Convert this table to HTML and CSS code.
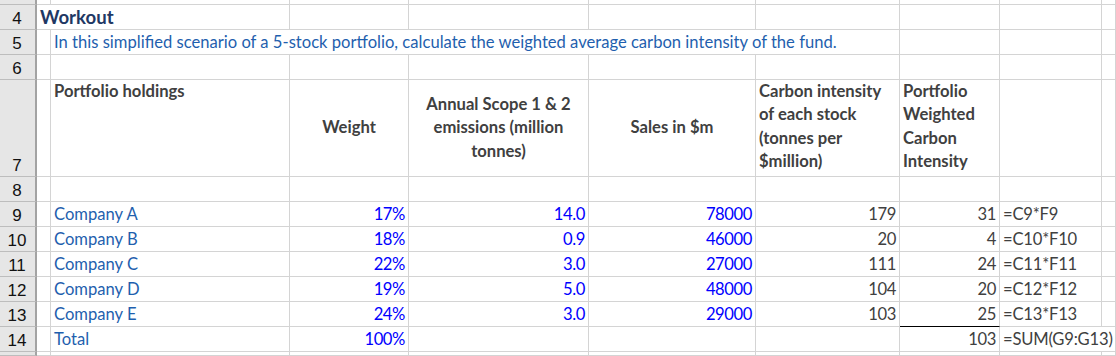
FILE: index.html
```html
<!DOCTYPE html>
<html lang="en">
<head>
<meta charset="utf-8">
<title>Workout</title>
<link rel="stylesheet" href="styles.css">
</head>
<body>
<div class="sheet">
  <!-- row 3 (partial) -->
  <div class="rh"></div><div class="c"></div><div class="c"></div><div class="c"></div><div class="c"></div><div class="c"></div><div class="c"></div><div class="c"></div><div class="c"></div><div class="c"></div>

  <!-- row 4 -->
  <div class="rh">4</div>
  <div class="c span2 title">Workout</div>
  <div class="c"></div><div class="c"></div><div class="c"></div><div class="c"></div><div class="c"></div><div class="c"></div><div class="c"></div>

  <!-- row 5 -->
  <div class="rh">5</div>
  <div class="c"></div>
  <div class="c span5 blue">In this simplified scenario of a 5-stock portfolio, calculate the weighted average carbon intensity of the fund.</div>
  <div class="c"></div><div class="c"></div><div class="c"></div>

  <!-- row 6 -->
  <div class="rh">6</div>
  <div class="c"></div><div class="c"></div><div class="c"></div><div class="c"></div><div class="c"></div><div class="c"></div><div class="c"></div><div class="c"></div><div class="c"></div>

  <!-- row 7 -->
  <div class="rh">7</div>
  <div class="c"></div>
  <div class="c hdr top">Portfolio holdings</div>
  <div class="c hdr mid">Weight</div>
  <div class="c hdr mid">Annual Scope 1 &amp; 2<br>emissions (million<br>tonnes)</div>
  <div class="c hdr mid">Sales in $m</div>
  <div class="c hdr top">Carbon intensity<br>of each stock<br>(tonnes per<br>$million)</div>
  <div class="c hdr top">Portfolio<br>Weighted<br>Carbon<br>Intensity</div>
  <div class="c"></div><div class="c"></div>

  <!-- row 8 -->
  <div class="rh">8</div>
  <div class="c"></div><div class="c"></div><div class="c"></div><div class="c"></div><div class="c"></div><div class="c"></div><div class="c"></div><div class="c"></div><div class="c"></div>

  <!-- row 9 -->
  <div class="rh">9</div>
  <div class="c"></div>
  <div class="c blue">Company A</div>
  <div class="c num inp">17%</div>
  <div class="c num inp">14.0</div>
  <div class="c num inp">78000</div>
  <div class="c num calc">179</div>
  <div class="c num calc">31</div>
  <div class="c calc formula">=C9*F9</div>
  <div class="c"></div>

  <!-- row 10 -->
  <div class="rh">10</div>
  <div class="c"></div>
  <div class="c blue">Company B</div>
  <div class="c num inp">18%</div>
  <div class="c num inp">0.9</div>
  <div class="c num inp">46000</div>
  <div class="c num calc">20</div>
  <div class="c num calc">4</div>
  <div class="c calc formula">=C10*F10</div>
  <div class="c"></div>

  <!-- row 11 -->
  <div class="rh">11</div>
  <div class="c"></div>
  <div class="c blue">Company C</div>
  <div class="c num inp">22%</div>
  <div class="c num inp">3.0</div>
  <div class="c num inp">27000</div>
  <div class="c num calc">111</div>
  <div class="c num calc">24</div>
  <div class="c calc formula">=C11*F11</div>
  <div class="c"></div>

  <!-- row 12 -->
  <div class="rh">12</div>
  <div class="c"></div>
  <div class="c blue">Company D</div>
  <div class="c num inp">19%</div>
  <div class="c num inp">5.0</div>
  <div class="c num inp">48000</div>
  <div class="c num calc">104</div>
  <div class="c num calc">20</div>
  <div class="c calc formula">=C12*F12</div>
  <div class="c"></div>

  <!-- row 13 -->
  <div class="rh">13</div>
  <div class="c"></div>
  <div class="c blue">Company E</div>
  <div class="c num inp">24%</div>
  <div class="c num inp">3.0</div>
  <div class="c num inp">29000</div>
  <div class="c num calc">103</div>
  <div class="c num calc underline">25</div>
  <div class="c calc formula">=C13*F13</div>
  <div class="c"></div>

  <!-- row 14 -->
  <div class="rh">14</div>
  <div class="c"></div>
  <div class="c blue">Total</div>
  <div class="c num inp">100%</div>
  <div class="c"></div>
  <div class="c"></div>
  <div class="c"></div>
  <div class="c num calc">103</div>
  <div class="c span2 calc formula">=SUM(G9:G13)</div>

  <!-- row 15 (partial) -->
  <div class="rh"></div><div class="c"></div><div class="c"></div><div class="c"></div><div class="c"></div><div class="c"></div><div class="c"></div><div class="c"></div><div class="c"></div><div class="c"></div>
</div>
</body>
</html>
```

FILE: styles.css
```css
* {
  box-sizing: border-box;
}

html, body {
  margin: 0;
  padding: 0;
  background: #ffffff;
}

body {
  width: 1116px;
  height: 356px;
  overflow: hidden;
}

.sheet {
  display: grid;
  grid-template-columns: 37px 14px 239px 119px 180px 167px 144px 100px 102px 1fr;
  grid-template-rows: 5px 25px 25px 25px 97px 25px 25px 25px 25px 25px 25px 25px 1fr;
  width: 1116px;
  height: 356px;
  font-family: "Lato", "Liberation Sans", sans-serif;
  font-size: 16.6px;
  line-height: 23px;
}

.rh {
  background: #e6e6e6;
  border-right: 2px solid #a3a3a3;
  border-bottom: 1px solid #bdbdbd;
  font-family: "Liberation Sans", Arial, sans-serif;
  font-size: 17px;
  line-height: 21px;
  color: #111111;
  display: flex;
  align-items: flex-end;
  justify-content: center;
  padding-right: 1px;
}

.c {
  border-right: 1px solid #d4d4d4;
  border-bottom: 1px solid #d4d4d4;
  display: flex;
  align-items: flex-end;
  padding: 0 3px;
  white-space: nowrap;
  overflow: visible;
  min-width: 0;
}

.span2 {
  grid-column: span 2;
}

.span5 {
  grid-column: span 5;
}

.title {
  font-weight: 700;
  font-size: 18.6px;
  color: #1f3864;
  padding-left: 3px;
}

.blue {
  color: #1f5fae;
}

.hdr {
  font-weight: 700;
  color: #404040;
  line-height: 23.3px;
  white-space: normal;
}

.hdr.top {
  align-items: flex-start;
}

.hdr.mid {
  align-items: center;
  justify-content: center;
  text-align: center;
}

.num {
  justify-content: flex-end;
  letter-spacing: -0.4px;
}

.formula {
  letter-spacing: -0.2px;
}

.inp {
  color: #0000ff;
}

.calc {
  color: #404040;
}

.underline {
  border-bottom: 1px solid #000000;
}
```
